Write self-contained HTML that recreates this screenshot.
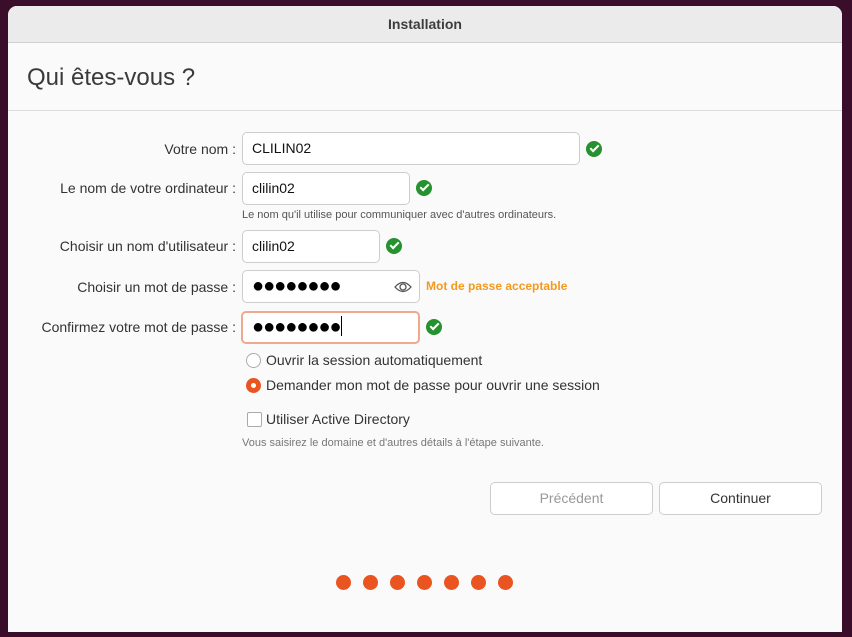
<!DOCTYPE html><html><head><style>
body{margin:0;width:852px;height:637px;background:#3a0d2a;font-family:"Liberation Sans",sans-serif;position:relative;overflow:hidden;color:#333}
.win{position:absolute;left:8px;top:6px;width:834px;height:626px;background:#fafafa;border-radius:9px 9px 0 0;overflow:hidden}
.tb{height:36px;background:#ebebeb;border-bottom:1px solid #cfcfcf;text-align:center;font-weight:bold;font-size:14px;line-height:37px;color:#3d3d3d}
.hd{height:67px;border-bottom:1px solid #dcdcdc;font-size:24px;padding-left:19px;line-height:70px;color:#3a3a3a}
.a{position:absolute}
.lb{position:absolute;right:606px;font-size:14px;text-align:right;white-space:nowrap}
.in{position:absolute;left:234px;height:31px;border:1px solid #cdcdcd;border-radius:5px;background:#fff;font-size:14px;line-height:31px;padding-left:9px;box-sizing:content-box;color:#111}
.ck{position:absolute;width:16px;height:16px;border-radius:50%;background:#26912f}
.ck:after{content:"";position:absolute;left:4px;top:4px;width:7px;height:3px;border-left:2px solid #fff;border-bottom:2px solid #fff;transform:rotate(-45deg)}
.dots{font-size:20px;letter-spacing:-1px;color:#000}
.sm{position:absolute;font-size:11px;color:#555}
.btn{position:absolute;top:476px;width:161px;height:31px;border:1px solid #cdcdcd;border-radius:5px;background:#fff;text-align:center;line-height:31px;font-size:14px}
.d{position:absolute;top:569px;width:15px;height:15px;border-radius:50%;background:#e95420}
</style></head><body><div class="win">
<div class="tb">Installation</div>
<div class="hd">Qui êtes-vous ?</div>
<div class="lb" style="top:135px">Votre nom :</div>
<div class="in" style="top:126px;width:327px">CLILIN02</div><div class="ck" style="left:578px;top:135px"></div>
<div class="lb" style="top:174px">Le nom de votre ordinateur :</div>
<div class="in" style="top:166px;width:157px">clilin02</div><div class="ck" style="left:408px;top:174px"></div>
<div class="sm" style="left:234px;top:203px">Le nom qu'il utilise pour communiquer avec d'autres ordinateurs.</div>
<div class="lb" style="top:232px">Choisir un nom d'utilisateur :</div>
<div class="in" style="top:224px;width:127px">clilin02</div><div class="ck" style="left:378px;top:232px"></div>
<div class="lb" style="top:273px">Choisir un mot de passe :</div>
<div class="in dots" style="top:264px;width:167px">●●●●●●●●</div>
<svg class="a" style="left:386px;top:274px" width="18" height="14" viewBox="0 0 18 14"><path d="M1 7Q9-2 17 7Q9 16 1 7Z" fill="none" stroke="#555" stroke-width="1.3"/><circle cx="9" cy="7" r="3" fill="none" stroke="#555" stroke-width="1.3"/></svg>
<div class="a" style="left:418px;top:273px;font-size:12px;font-weight:bold;color:#f39a1e">Mot de passe acceptable</div>
<div class="lb" style="top:313px">Confirmez votre mot de passe :</div>
<div class="in dots" style="width:166px;border-color:#f0a88f;border-width:2px;top:305px;left:233px;height:29px;line-height:29px">●●●●●●●●<span style="display:inline-block;width:1px;height:20px;background:#000;vertical-align:-3px"></span></div><div class="ck" style="left:418px;top:313px"></div>
<div class="a" style="left:238px;top:347px;width:13px;height:13px;border:1px solid #aaa;border-radius:50%;background:#fff"></div>
<div class="a" style="left:258px;top:346px;font-size:14px">Ouvrir la session automatiquement</div>
<div class="a" style="left:238px;top:372px;width:15px;height:15px;border-radius:50%;background:#e95420"><div style="position:absolute;left:5px;top:5px;width:5px;height:5px;border-radius:50%;background:#fff"></div></div>
<div class="a" style="left:258px;top:371px;font-size:14px">Demander mon mot de passe pour ouvrir une session</div>
<div class="a" style="left:239px;top:406px;width:13px;height:13px;border:1px solid #aaa;border-radius:2px;background:#fff"></div>
<div class="a" style="left:258px;top:405px;font-size:14px">Utiliser Active Directory</div>
<div class="sm" style="left:234px;top:431px;color:#777">Vous saisirez le domaine et d'autres détails à l'étape suivante.</div>
<div class="btn" style="left:482px;color:#999">Précédent</div>
<div class="btn" style="left:651px">Continuer</div>
<div class="d" style="left:328px"></div><div class="d" style="left:355px"></div><div class="d" style="left:382px"></div><div class="d" style="left:409px"></div><div class="d" style="left:436px"></div><div class="d" style="left:463px"></div><div class="d" style="left:490px"></div>
</div></body></html>
